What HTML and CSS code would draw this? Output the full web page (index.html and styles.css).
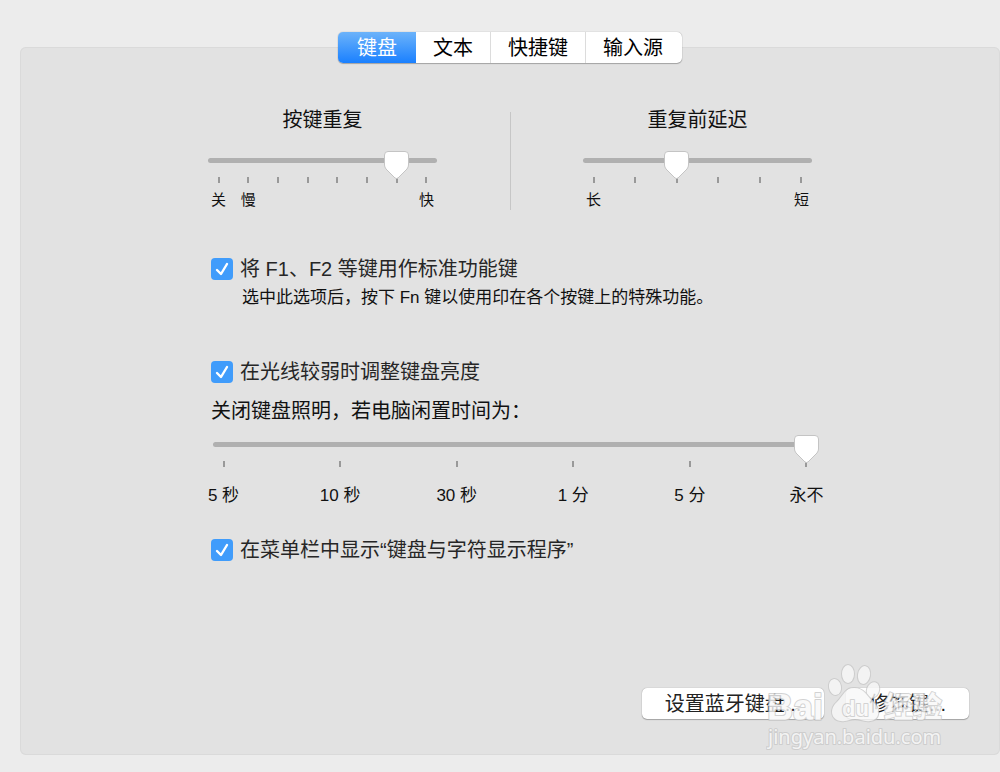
FILE: index.html
```html
<!DOCTYPE html>
<html lang="zh-CN">
<head>
    <meta charset="UTF-8">
    <meta name="viewport" content="width=device-width, initial-scale=1.0">
    <title>键盘</title>
    <link rel="stylesheet" href="styles.css">
</head>
<body>

    <main class="panel">
        <div class="tabs" role="tablist">
            <button type="button" role="tab" class="active" aria-selected="true">键盘</button>
            <button type="button" role="tab">文本</button>
            <button type="button" role="tab">快捷键</button>
            <button type="button" role="tab">输入源</button>
        </div>

        <form class="settings">
            <div class="repeat-row">
                <div class="repeat">
                    <label for="keyRepeat">按键重复</label>
                    <div class="slider">
                        <input type="range" id="keyRepeat" min="0" max="7" value="6">
                    </div>
                    <ul class="ticks">
                        <li>关</li>
                        <li>慢</li>
                        <li></li>
                        <li></li>
                        <li></li>
                        <li></li>
                        <li></li>
                        <li>快</li>
                    </ul>
                </div>

                <div class="divider"></div>

                <div class="repeat">
                    <label for="repeatDelay">重复前延迟</label>
                    <div class="slider">
                        <input type="range" id="repeatDelay" min="0" max="5" value="2">
                    </div>
                    <ul class="ticks">
                        <li>长</li>
                        <li></li>
                        <li></li>
                        <li></li>
                        <li></li>
                        <li>短</li>
                    </ul>
                </div>
            </div>

            <div class="option fn-option">
                <input type="checkbox" id="fnKeys" checked>
                <label for="fnKeys">将 F1、F2 等键用作标准功能键</label>
            </div>
            <p class="hint">选中此选项后，按下 Fn 键以使用印在各个按键上的特殊功能。</p>

            <div class="option light-option">
                <input type="checkbox" id="lowLight" checked>
                <label for="lowLight">在光线较弱时调整键盘亮度</label>
            </div>

            <div class="idle">
                <label for="idleTime">关闭键盘照明，若电脑闲置时间为：</label>
                <div class="slider">
                    <input type="range" id="idleTime" min="0" max="5" value="5">
                </div>
                <ul class="ticks large">
                    <li>5 秒</li>
                    <li>10 秒</li>
                    <li>30 秒</li>
                    <li>1 分</li>
                    <li>5 分</li>
                    <li>永不</li>
                </ul>
            </div>

            <div class="option menu-option">
                <input type="checkbox" id="showViewer" checked>
                <label for="showViewer">在菜单栏中显示“键盘与字符显示程序”</label>
            </div>
        </form>

        <div class="actions">
            <button type="button">设置蓝牙键盘...</button>
            <button type="button">修饰键...</button>

            <!-- Watermark over the buttons -->
            <svg class="watermark" width="184" height="92" viewBox="0 0 184 92" aria-hidden="true">
                <g class="mark">
                    <text x="1" y="57" class="brand">Bai</text>
                    <ellipse cx="69" cy="24" rx="6" ry="8" transform="rotate(-12 69 24)"/>
                    <ellipse cx="82" cy="11" rx="6" ry="9"/>
                    <ellipse cx="98" cy="12" rx="6" ry="9" transform="rotate(10 98 12)"/>
                    <ellipse cx="107" cy="27" rx="6" ry="8" transform="rotate(20 107 27)"/>
                    <path d="M88 25c-9 0-11 8-17 14-8 7-6 18 4 19 6 1 9-2 14-2s9 3 15 2c10-1 11-12 3-19-6-6-9-14-19-14z"/>
                    <text x="76" y="53" class="du">du</text>
                    <text x="118" y="55" class="cjk">经验</text>
                    <text x="2" y="81" class="site">jingyan.baidu.com</text>
                </g>
            </svg>
        </div>
    </main>

</body>
</html>
```

FILE: styles.css
```css
* {
    box-sizing: border-box;
}

body {
    margin: 0;
    padding: 47px 0 17px 20px;
    background-color: #ececec;
    color: #111;
    font-family: "Liberation Sans", "Noto Sans CJK SC", sans-serif;
    font-size: 20px;
    line-height: 28px;
}

button, input {
    font: inherit;
    margin: 0;
}

.panel {
    background-color: #e2e2e2;
    border-radius: 6px;
    box-shadow: inset 0 0 0 1px #dadada;
    padding: 0 31px 36px;
}

/* Segmented control sitting on the top edge of the panel */
.tabs {
    display: flex;
    width: fit-content;
    margin: 0 auto;
    position: relative;
    top: -15px;
    height: 31px;
    border-radius: 5px;
    background-color: white;
    box-shadow: 0 0 1px rgba(0, 0, 0, 0.4), 0 1px 1px rgba(0, 0, 0, 0.25);
}

.tabs button {
    padding: 1px 17px 0;
    border: none;
    border-right: 1px solid #dcdcdc;
    background: none;
    color: #000;
    line-height: 30px;
}

.tabs button:last-child {
    border-right: none;
    padding-right: 19px;
}

.tabs .active {
    padding: 1px 19px 0;
    border-right: none;
    border-radius: 5px 0 0 5px;
    background: linear-gradient(#6cb3fa, #1a80ff);
    color: white;
}

.settings {
    max-width: 618px;
    margin: 28px auto 0;
}

.repeat-row {
    display: grid;
    grid-template-columns: 1fr 142px 1fr;
    padding: 0 5px;
}

.repeat > label {
    display: block;
    text-align: center;
}

.divider {
    width: 1px;
    margin: 6px auto 0;
    background-color: #c6c6c6;
}

/* Sliders */
.slider {
    position: relative;
    height: 28px;
    margin-top: 17px;
}

.slider::before {
    content: "";
    position: absolute;
    top: 7px;
    left: 2px;
    right: 2px;
    height: 5px;
    border-radius: 3px;
    background-color: #b0b0b0;
}

.slider input {
    -webkit-appearance: none;
    appearance: none;
    position: relative;
    display: block;
    width: 100%;
    height: 28px;
    background: none;
}

.slider input::-webkit-slider-thumb {
    -webkit-appearance: none;
    width: 25px;
    height: 28px;
    border: none;
    background: url("data:image/svg+xml,%3Csvg xmlns='http://www.w3.org/2000/svg' width='25' height='28'%3E%3Cpath d='M4 .5h17q3.500 0 3.500 3.500v10q0 2-1.500 4l-9 9q-1.500 1-3 0l-9-9Q.5 16 .5 14V4Q.5.5 4 .5z' fill='white' stroke='%23c4c4c4'/%3E%3C/svg%3E") no-repeat;
}

.ticks {
    display: flex;
    justify-content: space-between;
    list-style: none;
    margin: -2px 0 0;
    padding: 0 12px;
    font-size: 15px;
    line-height: 20px;
}

.ticks li {
    display: flex;
    flex-direction: column;
    align-items: center;
    gap: 7px;
    width: 1px;
    white-space: nowrap;
}

.ticks li::before {
    content: "";
    width: 2px;
    height: 6px;
    background-color: #999;
}

.ticks.large {
    font-size: 17px;
    line-height: 24px;
}

.ticks.large li {
    gap: 17px;
}

/* Checkboxes */
.option {
    display: flex;
    align-items: center;
    gap: 7px;
    margin-left: 10px;
    color: #262626;
}

.option input {
    -webkit-appearance: none;
    appearance: none;
    width: 22px;
    height: 22px;
    border-radius: 4px;
    background-color: #fff;
}

.option input:checked {
    background: #409cfb url("data:image/svg+xml,%3Csvg xmlns='http://www.w3.org/2000/svg' width='22' height='22'%3E%3Cpath d='M6 12l4 4 6-10' fill='none' stroke='white' stroke-width='2.400' stroke-linecap='round' stroke-linejoin='round'/%3E%3C/svg%3E") no-repeat;
}

.fn-option {
    margin-top: 45px;
}

.hint {
    margin: 3px 0 0 41px;
    font-size: 17px;
    line-height: 24px;
}

.light-option {
    margin-top: 48px;
}

.idle {
    margin: 11px 0 0 10px;
}

.idle > label {
    display: block;
}

.idle .slider {
    margin-top: 10px;
}

.menu-option {
    margin-top: 28px;
}

/* Bottom buttons */
.actions {
    position: relative;
    display: flex;
    justify-content: flex-end;
    gap: 22px;
    margin-top: 124px;
}

.actions button {
    height: 31px;
    padding: 1px 23px 0;
    border: none;
    border-radius: 5px;
    background-color: white;
    box-shadow: 0 0 1px rgba(0, 0, 0, 0.4), 0 1px 1px rgba(0, 0, 0, 0.25);
    color: #222;
    line-height: 30px;
}

.watermark {
    position: absolute;
    right: 19px;
    top: -25px;
    pointer-events: none;
}

.mark {
    fill: #f8f8f8;
    stroke: #c8c8c8;
    stroke-width: 2px;
    stroke-linejoin: round;
    paint-order: stroke;
    opacity: 0.8;
}

.brand {
    font-size: 36px;
    font-weight: bold;
}

.du {
    font-size: 22px;
    font-weight: bold;
}

.cjk {
    font-size: 29px;
    font-weight: bold;
}

.site {
    font-family: "Noto Sans", sans-serif;
    font-size: 20px;
}
```
